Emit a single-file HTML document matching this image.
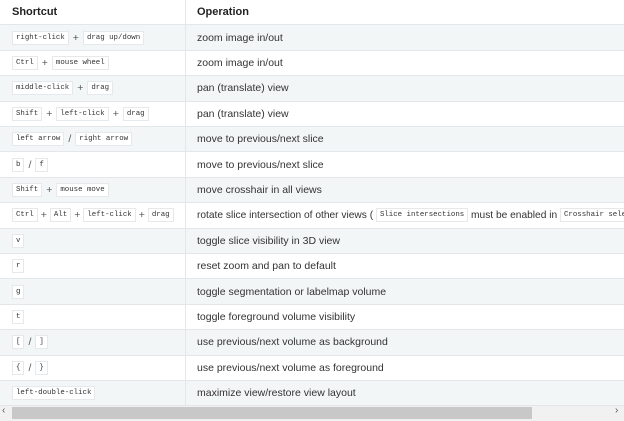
<!DOCTYPE html><html><head><style>
body{margin:0;width:624px;height:421px;overflow:hidden;background:#fff;font-family:"Liberation Sans",sans-serif;}
.r{position:absolute;left:0;width:624px;height:25.4px;box-sizing:border-box;border-bottom:1px solid #e3e7ea;font-size:10.5px;color:#333;overflow:hidden}
.r.g{background:#f3f6f7}
.c1{position:absolute;left:12px;top:0;height:100%;display:flex;align-items:center;white-space:nowrap}
.c2{position:absolute;left:197px;top:0;height:100%;display:flex;align-items:center;white-space:nowrap}
.d{position:absolute;left:185px;top:0;width:1px;height:100%;background:#e3e7ea}
k{display:inline-block;font-family:"Liberation Mono",monospace;font-size:7.4px;line-height:12px;background:#fff;border:1px solid #e6e9eb;padding:0 3px;color:#333}
.p{margin:0 4px;color:#555}
.h{font-weight:bold;font-size:11px;color:#222}
</style></head><body>
<div class="r" style="top:0;height:25.4px"><div class="c1 h">Shortcut</div><div class="d"></div><div class="c2 h">Operation</div></div>
<div class="r g" style="top:25.4px"><div class="c1"><k>right-click</k><span class="p">+</span><k>drag up/down</k></div><div class="d"></div><div class="c2">zoom image in/out</div></div>
<div class="r" style="top:50.8px"><div class="c1"><k>Ctrl</k><span class="p">+</span><k>mouse wheel</k></div><div class="d"></div><div class="c2">zoom image in/out</div></div>
<div class="r g" style="top:76.2px"><div class="c1"><k>middle-click</k><span class="p">+</span><k>drag</k></div><div class="d"></div><div class="c2">pan (translate) view</div></div>
<div class="r" style="top:101.6px"><div class="c1"><k>Shift</k><span class="p">+</span><k>left-click</k><span class="p">+</span><k>drag</k></div><div class="d"></div><div class="c2">pan (translate) view</div></div>
<div class="r g" style="top:127px"><div class="c1"><k>left arrow</k><span class="p">/</span><k>right arrow</k></div><div class="d"></div><div class="c2">move to previous/next slice</div></div>
<div class="r" style="top:152.4px"><div class="c1"><k>b</k><span class="p">/</span><k>f</k></div><div class="d"></div><div class="c2">move to previous/next slice</div></div>
<div class="r g" style="top:177.8px"><div class="c1"><k>Shift</k><span class="p">+</span><k>mouse move</k></div><div class="d"></div><div class="c2">move crosshair in all views</div></div>
<div class="r" style="top:203.2px"><div class="c1"><k>Ctrl</k><span class="p" style="margin:0 3px">+</span><k>Alt</k><span class="p" style="margin:0 3px">+</span><k>left-click</k><span class="p" style="margin:0 3px">+</span><k>drag</k></div><div class="d"></div><div class="c2" style="font-size:10.2px">rotate slice intersection of other views (&nbsp;<k>Slice intersections</k>&nbsp;must be enabled in&nbsp;<k>Crosshair selection</k></div></div>
<div class="r g" style="top:228.6px"><div class="c1"><k>v</k></div><div class="d"></div><div class="c2">toggle slice visibility in 3D view</div></div>
<div class="r" style="top:254px"><div class="c1"><k>r</k></div><div class="d"></div><div class="c2">reset zoom and pan to default</div></div>
<div class="r g" style="top:279.4px"><div class="c1"><k>g</k></div><div class="d"></div><div class="c2">toggle segmentation or labelmap volume</div></div>
<div class="r" style="top:304.8px"><div class="c1"><k>t</k></div><div class="d"></div><div class="c2">toggle foreground volume visibility</div></div>
<div class="r g" style="top:330.2px"><div class="c1"><k>[</k><span class="p">/</span><k>]</k></div><div class="d"></div><div class="c2">use previous/next volume as background</div></div>
<div class="r" style="top:355.6px"><div class="c1"><k>{</k><span class="p">/</span><k>}</k></div><div class="d"></div><div class="c2">use previous/next volume as foreground</div></div>
<div class="r g" style="top:381px"><div class="c1"><k>left-double-click</k></div><div class="d"></div><div class="c2">maximize view/restore view layout</div></div>
<div style="position:absolute;left:0;top:406px;width:624px;height:15px;background:#f1f1f1"></div>
<div style="position:absolute;left:12px;top:407px;width:520px;height:12px;background:#c8c8c8"></div>
<div style="position:absolute;left:2px;top:405px;font-size:10px;color:#555">‹</div>
<div style="position:absolute;left:615px;top:405px;font-size:10px;color:#555">›</div>
</body></html>
